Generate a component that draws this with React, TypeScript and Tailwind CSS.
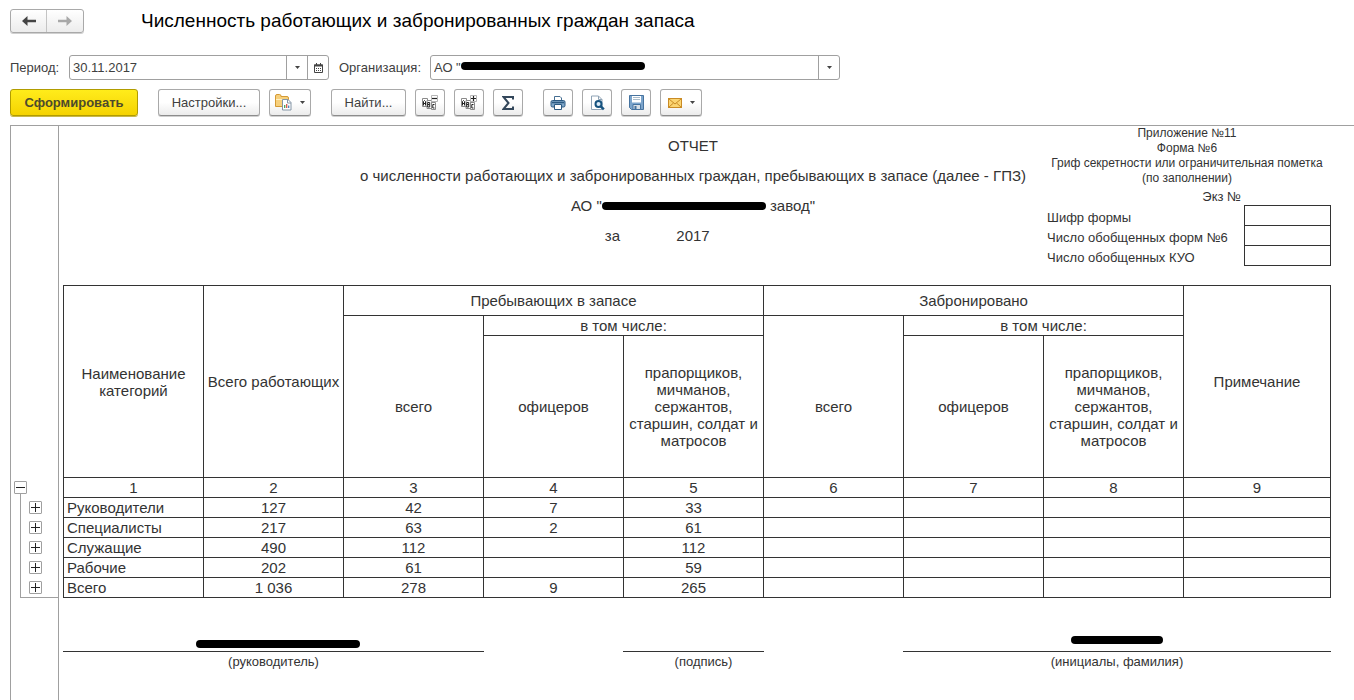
import type { ReactNode } from 'react';

interface CategoryRow {
  name: string;
  values: string[];
}

const ROWS: CategoryRow[] = [
  { name: 'Руководители', values: ['127', '42', '7', '33', '', '', '', ''] },
  { name: 'Специалисты', values: ['217', '63', '2', '61', '', '', '', ''] },
  { name: 'Служащие', values: ['490', '112', '', '112', '', '', '', ''] },
  { name: 'Рабочие', values: ['202', '61', '', '59', '', '', '', ''] },
  { name: 'Всего', values: ['1 036', '278', '9', '265', '', '', '', ''] },
];

const CODES = ['Шифр формы', 'Число обобщенных форм №6', 'Число обобщенных КУО'];

const BUTTON =
  'flex h-[27px] shrink-0 items-center justify-center rounded-[3px] border border-[#a9a9a9] border-b-[#8c8c8c] bg-linear-to-b from-white from-50% to-[#ececec] shadow-[0_1px_0_#d0d0d0]';

const CELL = 'border border-[#333] p-0 font-normal';

function Caret() {
  return (
    <svg width="5" height="3" viewBox="0 0 5 3" aria-hidden="true">
      <path d="M0 0h5L2.5 3z" fill="#444" />
    </svg>
  );
}

function ToolButton({ label, wide, children }: { label: string; wide?: boolean; children: ReactNode }) {
  return (
    <button type="button" aria-label={label} className={`${BUTTON} ${wide ? 'w-[42px] gap-2' : 'w-[30px]'}`}>
      {children}
      {wide && <Caret />}
    </button>
  );
}

function Arrow({ back }: { back?: boolean }) {
  return (
    <svg width="14" height="10" viewBox="0 0 14 10" aria-hidden="true">
      {back ? (
        <path d="M0 5l5.500-5v3.700H14v2.600H5.500V10z" fill="#444" />
      ) : (
        <path d="M14 5L8.500 0v3.700H0v2.600h8.500V10z" fill="#a8a8a8" />
      )}
    </svg>
  );
}

function GroupsIcon({ expand }: { expand?: boolean }) {
  return (
    <svg width="16" height="16" viewBox="0 0 16 16" fill="none" aria-hidden="true">
      <g fill="#fff" stroke="#8a8a8a">
        <path d="M.5 3.500h5v8h-5z" />
        <path d="M5 5.500h4.500v8H5z" />
        <path d="M9.500 7.500h4v7h-4z" />
      </g>
      <path
        d="M1.500 10.500v-4l1-1 1 1v4M1.500 8.500h2M5.700 12V7.500h2v2h-2M7.700 9.500V12h-2M12.500 9.500h-1.700v3.500h1.700"
        stroke="#222"
      />
      <path d="M9.500.5h6v6h-6z" fill="#fff" stroke="#b5b5b5" />
      <path d={expand ? 'M10 3.500h5M12.500 1v5' : 'M10 3.500h5'} stroke="#222" strokeWidth="1.200" />
    </svg>
  );
}

function VariantsIcon() {
  return (
    <svg width="17" height="17" viewBox="0 0 17 17" aria-hidden="true">
      <path d="M.5 12.500V2q0-1.500 1.500-1.500h2.500Q6 .5 6 2v.5h6q1.500 0 1.500 1.500v8.500z" fill="#f7d07c" stroke="#d49a35" />
      <path d="M1 5.500h12" stroke="#fff0c2" />
      <path d="M7.500 5.500h5.500l3 3v7.500H7.500z" fill="#fff" stroke="#8495a6" />
      <path d="M12.500 5.500V9H16" fill="none" stroke="#8495a6" />
      <path d="M9.700 14v-3" stroke="#3f9b4b" strokeWidth="1.200" />
      <path d="M11.700 14v-4" stroke="#d24b3f" strokeWidth="1.200" />
      <path d="M13.700 14v-2.500" stroke="#3b78b8" strokeWidth="1.200" />
    </svg>
  );
}

function PrintIcon() {
  return (
    <svg width="16" height="14" viewBox="0 0 16 14" aria-hidden="true">
      <path d="M4.500 5V.5H10L11.500 2v3" fill="#fff" stroke="#456e92" />
      <rect x="1" y="4.500" width="14" height="6.500" rx="1.500" fill="#7fa6c8" stroke="#2c5a82" />
      <path d="M2 6.500h12" stroke="#2c5a82" strokeWidth="1.500" />
      <path d="M4.500 8.500h7v5h-7z" fill="#fff" stroke="#2c5a82" />
    </svg>
  );
}

function PreviewIcon() {
  return (
    <svg width="15" height="16" viewBox="0 0 15 16" fill="none" aria-hidden="true">
      <path d="M1.500 1h7l3.500 3.500V14.500H1.500z" fill="#fff" stroke="#8fa3b5" />
      <path d="M8.500 1v3.500H12" stroke="#8fa3b5" />
      <circle cx="8.500" cy="9" r="3" fill="#dcecf8" stroke="#17537f" strokeWidth="2" />
      <path d="m10.800 11.300 3 3" stroke="#17537f" strokeWidth="2.500" />
    </svg>
  );
}

function SaveIcon() {
  return (
    <svg width="15" height="15" viewBox="0 0 15 15" aria-hidden="true">
      <path d="M.5.5h14v14h-12l-2-2z" fill="#7ba4cb" stroke="#46739f" />
      <path d="M3 1h9v6.500H3z" fill="#fff" />
      <path d="M4 2.500h7M4 4.500h7" stroke="#a9bccb" />
      <path d="M4 9.500h7.500v5H4z" fill="#d8dfe6" stroke="#46739f" />
      <path d="M5.500 11h2v3.500h-2z" fill="#46739f" />
    </svg>
  );
}

function MailIcon() {
  return (
    <svg width="14" height="10" viewBox="0 0 14 10" aria-hidden="true">
      <rect x=".5" y=".5" width="13" height="9" fill="#fbd572" stroke="#c98b25" />
      <path d="M1 1l6 5 6-5M1 9l4.500-4M13 9 8.500 5" fill="none" stroke="#c98b25" />
    </svg>
  );
}

function CalendarIcon() {
  return (
    <svg width="9" height="10" viewBox="0 0 9 10" aria-hidden="true">
      <path d="M.5 2h8v7.500h-8z" fill="#fff" stroke="#444" />
      <path d="M0 1.500h9v2H0zM2 0h1v2H2zM6 0h1v2H6z" fill="#444" />
      <path d="M2 5.500h5M2 7.500h5" stroke="#444" strokeDasharray="1 1" />
    </svg>
  );
}

function TreeToggle({ open }: { open?: boolean }) {
  return (
    <button
      type="button"
      aria-label={open ? 'Свернуть' : 'Развернуть'}
      className="flex size-[13px] items-center justify-center rounded-[1px] border border-[#a0a0a0] bg-white"
    >
      <svg width="9" height="9" viewBox="0 0 9 9" stroke="#222" aria-hidden="true">
        <path d={open ? 'M0 4.500h9' : 'M0 4.500h9M4.500 0v9'} />
      </svg>
    </button>
  );
}

export default function App() {
  return (
    <div className="flex min-h-screen min-w-[1200px] flex-col bg-white font-['Liberation_Sans',Arial,sans-serif] text-[13px] text-[#404040]">
      <header className="flex items-center gap-[57px] px-[10px] pt-[9px]">
        <nav className="flex rounded-[3px] border border-[#a9a9a9] bg-linear-to-b from-white to-[#ececec] shadow-[0_1px_0_#d0d0d0]">
          <button type="button" aria-label="Назад" className="flex h-[22px] w-9 items-center justify-center border-r border-[#c4c4c4]">
            <Arrow back />
          </button>
          <button type="button" aria-label="Вперед" className="flex h-[22px] w-9 items-center justify-center">
            <Arrow />
          </button>
        </nav>
        <h1 className="text-[19px] leading-6 text-black">Численность работающих и забронированных граждан запаса</h1>
      </header>

      <div className="mt-[22px] flex items-center px-[10px]">
        <label htmlFor="period" className="w-[59px]">Период:</label>
        <div className="flex h-[25px] w-[260px] rounded-[3px] border border-[#a0a0a0]">
          <input id="period" type="text" defaultValue="30.11.2017" className="min-w-0 flex-1 px-[3px] outline-none" />
          <button type="button" aria-label="Выбрать" className="flex w-[21px] items-center justify-center border-l border-[#a0a0a0]">
            <Caret />
          </button>
          <button type="button" aria-label="Календарь" className="flex w-[21px] items-center justify-center border-l border-[#a0a0a0]">
            <CalendarIcon />
          </button>
        </div>
        <label htmlFor="organization" className="ml-[10px] w-[91px]">Организация:</label>
        <div className="relative h-[25px] w-[410px]">
          <select id="organization" className="size-full appearance-none rounded-[3px] border border-[#a0a0a0] bg-white px-[3px] outline-none">
            <option>АО "</option>
          </select>
          <span className="absolute top-[7px] left-[31px] h-2 w-[184px] rounded-full bg-black" />
          <span className="pointer-events-none absolute inset-y-0 right-0 flex w-[22px] items-center justify-center border-l border-[#a0a0a0]">
            <Caret />
          </span>
        </div>
      </div>

      <div className="mt-[9px] flex gap-5 px-[10px]">
        <button
          type="button"
          className="h-[27px] w-32 rounded-[3px] border border-[#b19c00] bg-linear-to-b from-[#ffec1a] to-[#f5d300] font-bold text-[#4d4a2c] shadow-[0_1px_0_#c9b84a]"
        >
          Сформировать
        </button>
        <div className="flex gap-[9px]">
          <button type="button" className={`${BUTTON} w-[102px]`}>Настройки...</button>
          <ToolButton label="Варианты отчета" wide><VariantsIcon /></ToolButton>
        </div>
        <div className="flex gap-[9px]">
          <button type="button" className={`${BUTTON} w-[75px]`}>Найти...</button>
          <ToolButton label="Свернуть группы"><GroupsIcon /></ToolButton>
          <ToolButton label="Развернуть группы"><GroupsIcon expand /></ToolButton>
          <ToolButton label="Сумма">
            <svg width="12" height="14" viewBox="0 0 12 14" fill="none" stroke="#33475b" strokeWidth="2" aria-hidden="true">
              <path d="M11 3.500V1H1.500l5 6-5 6H11v-2.500" />
            </svg>
          </ToolButton>
        </div>
        <div className="flex gap-[9px]">
          <ToolButton label="Печать"><PrintIcon /></ToolButton>
          <ToolButton label="Предварительный просмотр"><PreviewIcon /></ToolButton>
          <ToolButton label="Сохранить"><SaveIcon /></ToolButton>
          <ToolButton label="Отправить по почте" wide><MailIcon /></ToolButton>
        </div>
      </div>

      <main className="mt-[9px] ml-[10px] flex flex-1 border-t border-l border-[#a0a0a0] text-[#333]">
        {/* Grouping gutter */}
        <aside className="w-12 shrink-0 border-r border-[#a0a0a0] pt-[355px]">
          <div className="pl-[3px]">
            <TreeToggle open />
          </div>
          <div className="ml-[9px] border-b border-l border-[#a0a0a0] pt-[3px] pl-2">
            {ROWS.map((row) => (
              <div key={row.name} className="flex h-5 items-center">
                <TreeToggle />
              </div>
            ))}
          </div>
        </aside>

        <div className="min-w-0 flex-1 pr-[23px] pl-1 text-[15px]">
          <div className="grid h-[159px] grid-cols-[280px_700px_1fr]">
            <div className="col-start-2 pt-[5px] text-center leading-[30px]">
              <h2>ОТЧЕТ</h2>
              <p className="whitespace-nowrap">о численности работающих и забронированных граждан, пребывающих в запасе (далее - ГПЗ)</p>
              <p className="flex items-center justify-center whitespace-pre">
                АО "<span className="h-2 w-[164px] rounded-full bg-black" /> завод"
              </p>
              <div className="grid grid-cols-5">
                <span className="col-start-2 pr-[3px] text-right">за</span>
                <span>2017</span>
              </div>
            </div>
            <div className="pl-1 text-[13px]">
              <p className="pr-1 text-center text-[12px] leading-[15px] whitespace-nowrap">
                Приложение №11
                <br />
                Форма №6
                <br />
                Гриф секретности или ограничительная пометка
                <br />
                (по заполнении)
              </p>
              <p className="pt-[3px] pr-[90px] text-right leading-4">Экз №</p>
              <table className="w-full border-collapse">
                <tbody>
                  {CODES.map((code) => (
                    <tr key={code} className="h-5">
                      <th className="p-0 pt-1 text-left leading-4 font-normal whitespace-nowrap">{code}</th>
                      <td className="w-[86px] border border-[#333]" />
                    </tr>
                  ))}
                </tbody>
              </table>
            </div>
          </div>

          <table className="w-full table-fixed border-collapse text-center leading-[17px]">
            <colgroup>
              <col span={8} className="w-[140px]" />
              <col />
            </colgroup>
            <thead>
              <tr className="h-[30px]">
                <th rowSpan={3} className={CELL}>Наименование категорий</th>
                <th rowSpan={3} className={CELL}>Всего работающих</th>
                <th colSpan={3} className={CELL}>Пребывающих в запасе</th>
                <th colSpan={3} className={CELL}>Забронировано</th>
                <th rowSpan={3} className={CELL}>Примечание</th>
              </tr>
              <tr className="h-5">
                <th rowSpan={2} className={`${CELL} pt-5`}>всего</th>
                <th colSpan={2} className={CELL}>в том числе:</th>
                <th rowSpan={2} className={`${CELL} pt-5`}>всего</th>
                <th colSpan={2} className={CELL}>в том числе:</th>
              </tr>
              <tr className="h-[142px]">
                <th className={CELL}>офицеров</th>
                <th className={CELL}>прапорщиков, мичманов, сержантов, старшин, солдат и матросов</th>
                <th className={CELL}>офицеров</th>
                <th className={CELL}>прапорщиков, мичманов, сержантов, старшин, солдат и матросов</th>
              </tr>
              <tr className="h-5">
                {Array.from({ length: 9 }).map((_, i) => (
                  <th key={i} className={CELL}>{i + 1}</th>
                ))}
              </tr>
            </thead>
            <tbody>
              {ROWS.map((row) => (
                <tr key={row.name} className="h-5">
                  <th className={`${CELL} pl-[3px] text-left`}>{row.name}</th>
                  {row.values.map((value, i) => (
                    <td key={i} className={CELL}>{value}</td>
                  ))}
                </tr>
              ))}
            </tbody>
          </table>

          {/* Signatures */}
          <div className="mt-[34px] grid grid-cols-[421px_141px_1fr] gap-x-[139px] text-center text-[13px] leading-[19px]">
            <div>
              <div className="flex h-5 justify-center border-b border-[#333] pt-2 pl-2">
                <span className="h-2 w-[164px] rounded-full bg-black" />
              </div>
              (руководитель)
            </div>
            <div>
              <div className="h-5 border-b border-[#333]" />
              <p className="pl-5">(подпись)</p>
            </div>
            <div>
              <div className="flex h-5 justify-center border-b border-[#333] pt-1">
                <span className="h-2 w-[92px] rounded-full bg-black" />
              </div>
              (инициалы, фамилия)
            </div>
          </div>
        </div>
      </main>
    </div>
  );
}
